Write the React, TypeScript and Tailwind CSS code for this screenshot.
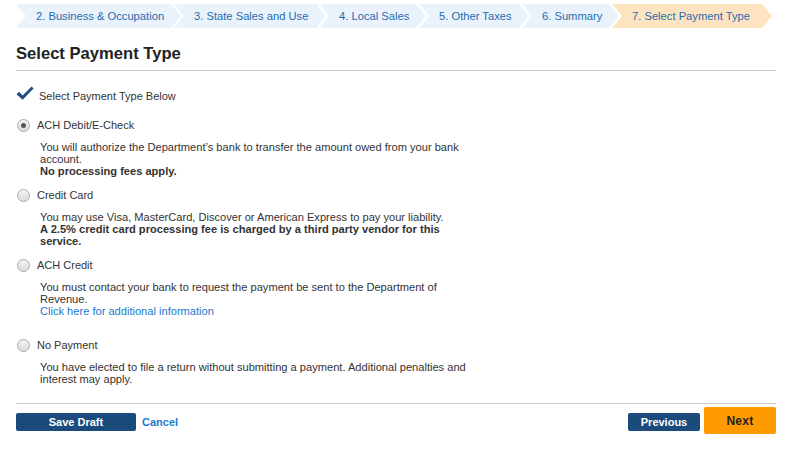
import React from "react";

const steps = [
  { label: "2. Business & Occupation", w: "w-[165px]", active: false },
  { label: "3. State Sales and Use", w: "w-[152px]", active: false },
  { label: "4. Local Sales", w: "w-[107px]", active: false },
  { label: "5. Other Taxes", w: "w-[110px]", active: false },
  { label: "6. Summary", w: "w-[97px]", active: false },
  { label: "7. Select Payment Type", w: "w-[160px]", active: true },
];

function Radio({ checked }: { checked?: boolean }) {
  return (
    <span className="flex h-[13px] w-[13px] shrink-0 items-center justify-center rounded-full border border-[#a9a9a9] bg-gradient-to-b from-[#f4f4f4] to-[#dcdcdc]">
      {checked && <span className="h-[5px] w-[5px] rounded-full bg-[#555]" />}
    </span>
  );
}

function Option({
  label,
  checked,
  children,
  className,
}: {
  label: string;
  checked?: boolean;
  children: React.ReactNode;
  className?: string;
}) {
  return (
    <div className={className}>
      <div className="flex h-[14px] items-center pl-[1px]">
        <Radio checked={checked} />
        <span className="ml-[7px] text-[11px] text-[#333]">{label}</span>
      </div>
      <div className="ml-[24px] mt-[9px] w-[440px] text-[11.1px] leading-[12px] text-[#333]">{children}</div>
    </div>
  );
}

export default function App() {
  return (
    <div className="h-[458px] w-[800px] bg-white px-[16px] pt-[4px] [font-family:Arial,'Liberation_Sans',sans-serif]">
      <div className="flex h-[24px]">
        {steps.map((s, i) => (
          <div
            key={s.label}
            className={`${s.w} ${i > 0 ? "-ml-[7px]" : ""} ${
              s.active ? "bg-[#fde3bf]" : "bg-[#eaf2fc]"
            } flex h-[24px] shrink-0 items-center whitespace-nowrap pl-[20px] text-[11.2px] text-[#1f6db0] [clip-path:polygon(0_0,calc(100%-10px)_0,100%_50%,calc(100%-10px)_100%,0_100%,10px_50%)]`}
          >
            {s.label}
          </div>
        ))}
      </div>

      <h1 className="mt-[16px] text-[16.6px] font-bold leading-[20px] text-[#222]">Select Payment Type</h1>
      <div className="mt-[6px] h-px w-[760px] bg-[#cccccc]" />

      <div className="mt-[15px] flex h-[16px] items-start">
        <svg width="18" height="15" viewBox="0 0 18 15" className="shrink-0">
          <path d="M0.5 8.2 L3 5.8 L6.6 9.4 L15.6 0.5 L17.6 2.6 L6.6 13.8 Z" fill="#234d7e" />
        </svg>
        <span className="ml-[5px] mt-[4px] text-[11px] leading-[12px] text-[#333]">Select Payment Type Below</span>
      </div>

      <Option label="ACH Debit/E-Check" checked className="mt-[16px]">
        <p>You will authorize the Department’s bank to transfer the amount owed from your bank account.</p>
        <p className="font-bold">No processing fees apply.</p>
      </Option>

      <Option label="Credit Card" className="mt-[11px]">
        <p>You may use Visa, MasterCard, Discover or American Express to pay your liability.</p>
        <p className="font-bold">A 2.5% credit card processing fee is charged by a third party vendor for this service.</p>
      </Option>

      <Option label="ACH Credit" className="mt-[11px]">
        <p>You must contact your bank to request the payment be sent to the Department of Revenue.</p>
        <p className="text-[#1a78cf]">Click here for additional information</p>
      </Option>

      <Option label="No Payment" className="mt-[21px]">
        <p>You have elected to file a return without submitting a payment. Additional penalties and interest may apply.</p>
      </Option>

      <div className="mt-[18px] h-px w-[760px] bg-[#cccccc]" />

      <div className="mt-[3px] flex w-[760px] items-start">
        <button className="mt-[6px] flex h-[18px] w-[120px] items-center justify-center rounded-[2px] bg-[#1b4b7c] text-[11px] font-bold text-white">
          Save Draft
        </button>
        <span className="ml-[6px] mt-[6px] flex h-[18px] items-center text-[11px] font-bold text-[#1a78cf]">Cancel</span>
        <div className="flex-1" />
        <button className="mt-[6px] flex h-[18px] w-[72px] items-center justify-center rounded-[2px] bg-[#1b4b7c] text-[11px] font-bold text-white">
          Previous
        </button>
        <button className="ml-[4px] flex h-[27px] w-[72px] items-center justify-center rounded-[2px] bg-[#ff9b00] text-[12px] font-bold tracking-[0.3px] text-[#222]">
          Next
        </button>
      </div>
    </div>
  );
}
